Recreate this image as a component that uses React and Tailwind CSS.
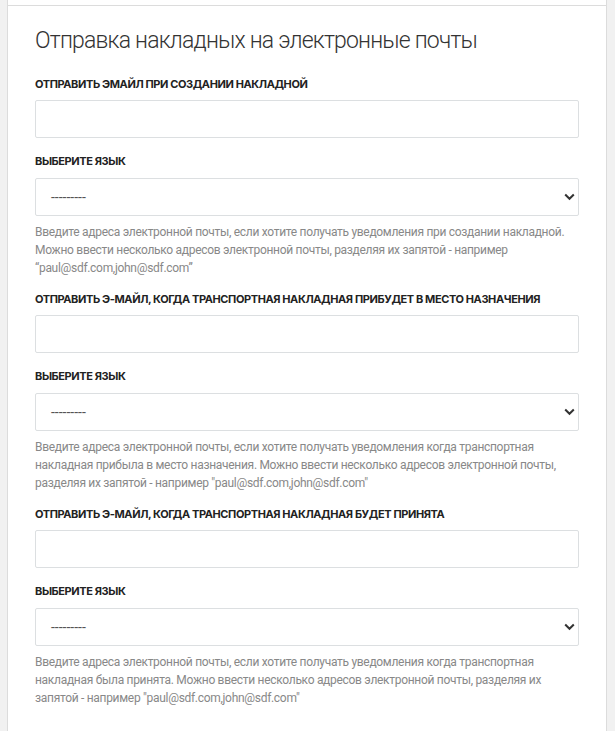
import React from "react";

const sections = [
  {
    label: "Отправить эмайл при создании накладной",
    help: "Введите адреса электронной почты, если хотите получать уведомления при создании накладной. Можно ввести несколько адресов электронной почты, разделяя их запятой - например \u201Cpaul@sdf.com,john@sdf.com\u201D",
  },
  {
    label: "Отправить э-майл, когда транспортная накладная прибудет в место назначения",
    help: "Введите адреса электронной почты, если хотите получать уведомления когда транспортная накладная прибыла в место назначения. Можно ввести несколько адресов электронной почты, разделяя их запятой - например \"paul@sdf.com,john@sdf.com\"",
  },
  {
    label: "Отправить э-майл, когда транспортная накладная будет принята",
    help: "Введите адреса электронной почты, если хотите получать уведомления когда транспортная накладная была принята. Можно ввести несколько адресов электронной почты, разделяя их запятой - например \"paul@sdf.com,john@sdf.com\"",
  },
];

const Label = ({ children }) => (
  <label className="block text-[11px] font-bold uppercase tracking-[-0.4px] text-[#222] font-['Inter',sans-serif] leading-[14px]">
    {children}
  </label>
);

const App = () => {
  return (
    <div className="h-[731px] overflow-hidden bg-[#f1f1f1] pl-[7px] pr-[8px]">
      <div className="h-[6px] border-x border-b border-[#dcdcdc] bg-white"></div>
      <div className="h-[725px] border-x border-[#dcdcdc] bg-white px-[27px] pt-[20px]">
        <h1 className="text-[23px] font-light leading-[30px] tracking-[-0.8px] text-[#333] font-['Roboto',sans-serif]">
          Отправка накладных на электронные почты
        </h1>

        {sections.map((s, i) => (
          <div key={i} className={i === 0 ? "mt-[21px]" : "mt-[15px]"}>
            <Label>{s.label}</Label>
            <input
              type="text"
              className="mt-[9px] block h-[38px] w-full rounded-[2px] border border-[#dcdfe1] bg-white px-3 outline-none"
            />
            <div className="mt-[16px]">
              <Label>Выберите язык</Label>
            </div>
            <div className="relative mt-[10px] h-[38px] w-full rounded-[2px] border border-[#dcdfe1] bg-white">
              <span className="absolute left-[15px] top-[10px] text-[14px] leading-[16px] text-[#555] font-['Roboto',sans-serif]">
                ---------
              </span>
              <svg
                className="absolute right-[3px] top-[14px]"
                width="11"
                height="8"
                viewBox="0 0 11 8"
              >
                <path
                  d="M1.2 1.5 L5.5 5.8 L9.8 1.5"
                  fill="none"
                  stroke="#333"
                  strokeWidth="2"
                />
              </svg>
            </div>
            <p className="mt-[7px] text-[12px] leading-[18px] tracking-[-0.3px] text-[#888] font-['Roboto',sans-serif]">
              {s.help}
            </p>
          </div>
        ))}
      </div>
    </div>
  );
};

export default App;
